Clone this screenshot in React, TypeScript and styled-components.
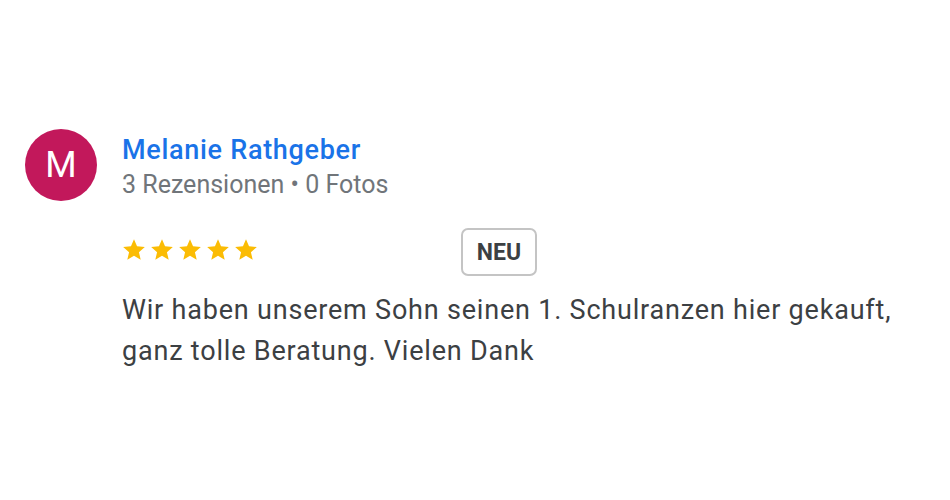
import styled, { createGlobalStyle } from "styled-components";

const GlobalStyle = createGlobalStyle`
  html, body {
    margin: 0;
    padding: 0;
    background: #ffffff;
  }
  body {
    font-family: Roboto, "Noto Sans", Arial, sans-serif;
    width: 950px;
    height: 500px;
    overflow: hidden;
  }
`;

const Review = styled.div`
  padding: 129px 0 0 25px;
`;

const Header = styled.div`
  display: flex;
  align-items: flex-start;
  gap: 25px;
`;

const Avatar = styled.div`
  width: 72px;
  height: 72px;
  border-radius: 50%;
  background: #c2185b;
  color: #fff;
  display: flex;
  align-items: center;
  justify-content: center;
  font-size: 36px;
  font-weight: 400;
`;

const Author = styled.div`
  display: flex;
  flex-direction: column;
  padding-top: 6px;
`;

const Name = styled.a`
  color: #1a73e8;
  font-size: 27px;
  font-weight: 500;
  letter-spacing: 0.7px;
  line-height: 30px;
  text-decoration: none;
`;

const Meta = styled.div`
  margin-top: 3px;
  color: #70757a;
  font-size: 25px;
  line-height: 34px;
`;

const Body = styled.div`
  margin-left: 97px;
  margin-top: 26px;
`;

const RatingRow = styled.div`
  display: flex;
  align-items: center;
`;

const Stars = styled.div`
  display: flex;
  gap: 2px;
  width: 340px;
  margin: 0 0 4px -1px;
`;

const Badge = styled.span`
  box-sizing: border-box;
  width: 76px;
  height: 48px;
  border: 2px solid #c4c4c4;
  border-radius: 7px;
  display: flex;
  align-items: center;
  justify-content: center;
  font-size: 23px;
  font-weight: 700;
  color: #3c4043;
`;

const Text = styled.p`
  margin: 14px 0 0;
  color: #3c4043;
  font-size: 27px;
  letter-spacing: 0.8px;
  line-height: 41px;
`;

const Star = () => (
  <svg width="26" height="26" viewBox="0 0 24 24">
    <path
      fill="#fbbc04"
      d="M12 17.27L18.18 21l-1.64-7.03L22 9.24l-7.19-.61L12 2 9.19 8.63 2 9.24l5.46 4.73L5.82 21z"
    />
  </svg>
);

export default function App() {
  return (
    <>
      <GlobalStyle />
      <Review>
        <Header>
          <Avatar>M</Avatar>
          <Author>
            <Name href="#">Melanie Rathgeber</Name>
            <Meta>3 Rezensionen • 0 Fotos</Meta>
          </Author>
        </Header>
        <Body>
          <RatingRow>
            <Stars>
              {[0, 1, 2, 3, 4].map((i) => (
                <Star key={i} />
              ))}
            </Stars>
            <Badge>NEU</Badge>
          </RatingRow>
          <Text>
            Wir haben unserem Sohn seinen 1. Schulranzen hier gekauft,
            <br />
            ganz tolle Beratung. Vielen Dank
          </Text>
        </Body>
      </Review>
    </>
  );
}
